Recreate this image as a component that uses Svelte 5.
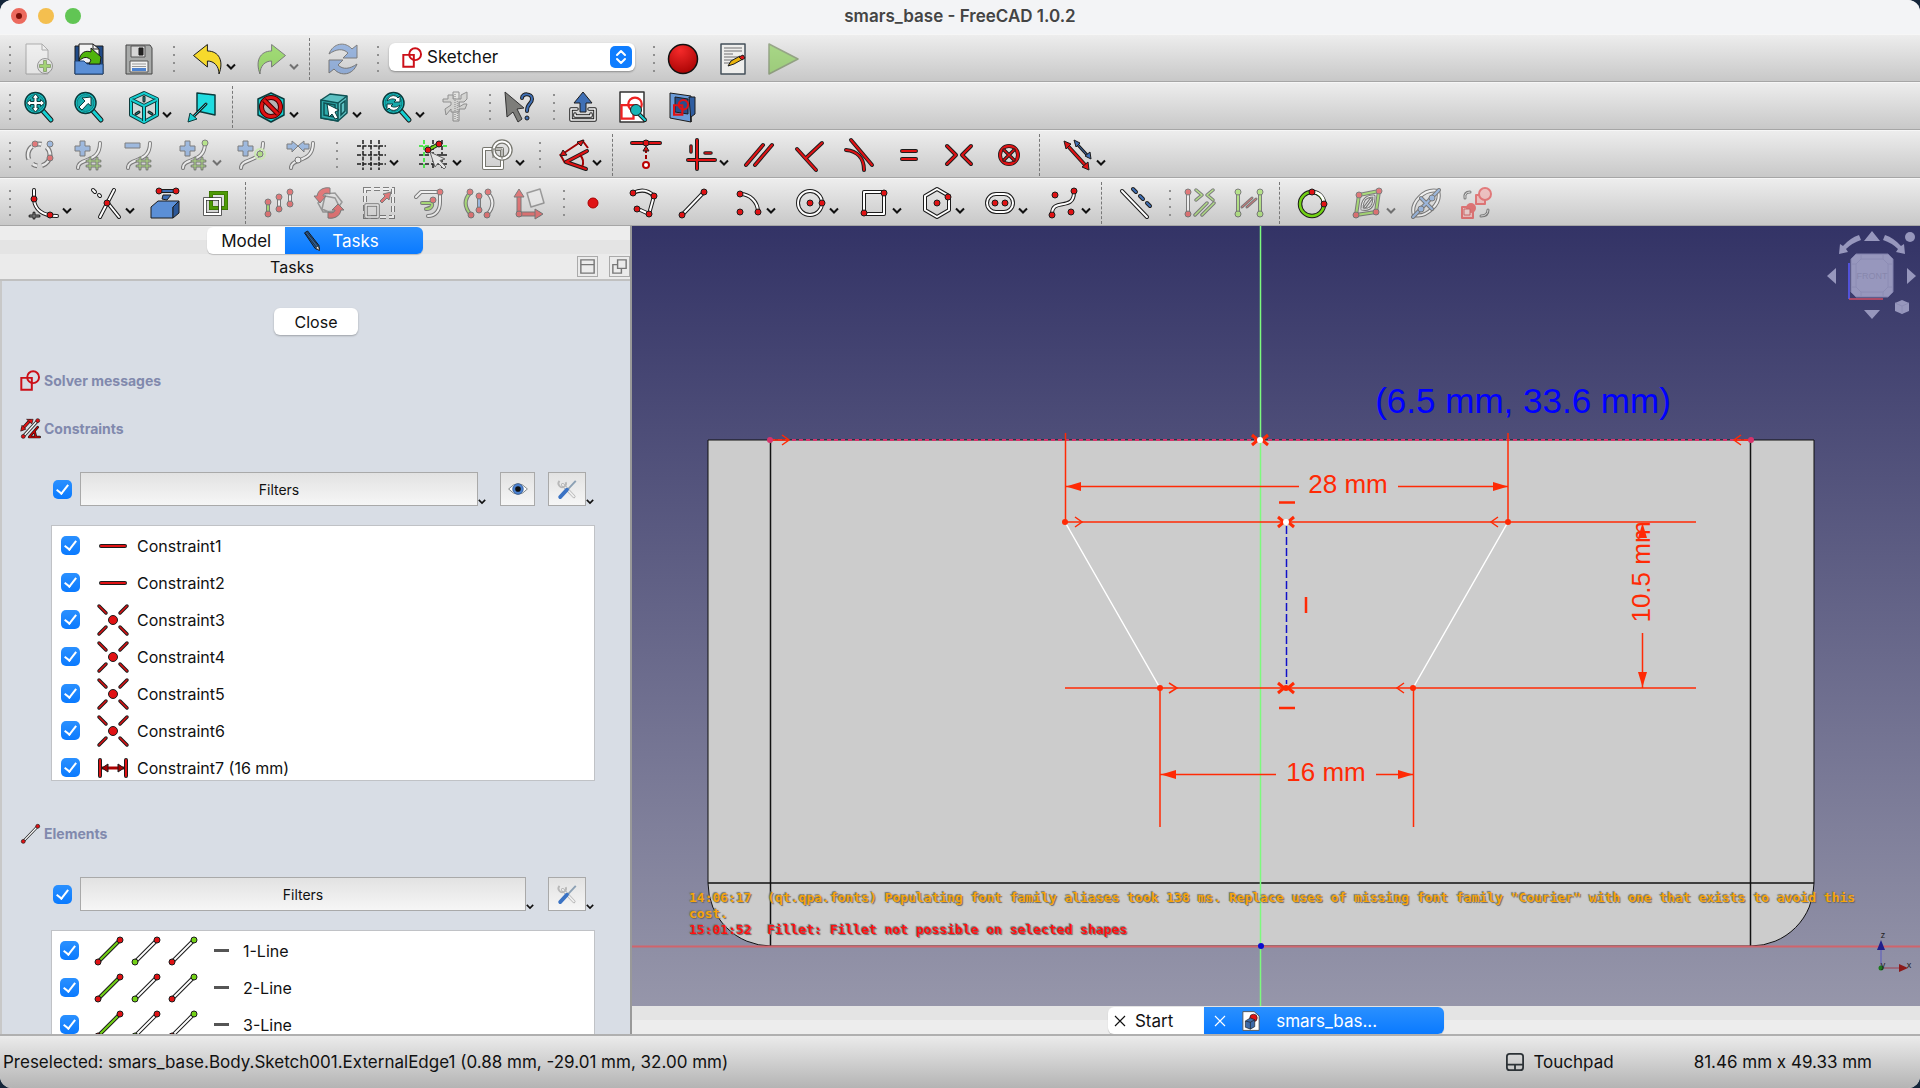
<script lang="ts">
  // Main window of the sketch editor: toolbars, task panel, 3D view, status bar.
  // Toolbar icons are drawn on a 32x32 grid out of a few shared shapes.
  const DARK = '#1c1c1c'
  const RED = '#e01214'
  const GREEN = '#73d216'
  const BLUE = '#3f6fb5'
  const TEAL = '#16d0d2'

  // outlined stroke: dark below, colour on top
  const rod = (d: string, color = '#fff', w = 2) =>
    `<g fill="none" stroke-linecap="round" stroke-linejoin="round"><path d="${d}" stroke="${DARK}" stroke-width="${w + 2}"/><path d="${d}" stroke="${color}" stroke-width="${w}"/></g>`
  const pt = (x: number, y: number, color = RED, r = 3) =>
    `<circle cx="${x}" cy="${y}" r="${r}" fill="${color}" stroke="${DARK}" stroke-width="1"/>`
  const shape = (d: string, fill: string, stroke = DARK, w = 1) =>
    `<path d="${d}" fill="${fill}" stroke="${stroke}" stroke-width="${w}" stroke-linejoin="round"/>`
  const line = (d: string, color = DARK, w = 1, extra = '') =>
    `<path d="${d}" fill="none" stroke="${color}" stroke-width="${w}" ${extra}/>`

  const lens = rod('M20 20 28 29', TEAL, 3) + `<circle cx="12.500" cy="12" r="10.500" fill="${TEAL}" stroke="#0b3b3c" stroke-width="1.500"/><circle cx="12.500" cy="12" r="8.500" fill="#18a9ab" stroke="#0e8284" stroke-width="1"/>`
  const hexagon = 'M16 2 29 8V24L16 31 3 24V8Z'
  const curve = rod('M5 29C5 18 27 25 27 4')
  const hash = rod('M17 19V30M24 19V30M14 22H27M14 27H27', '#8ae234', 1)
  const plus = shape('M7 2H12V7H17V12H12V17H7V12H2V7H7Z', '#5d92dc')
  const undo = (fill: string) => shape('M1.500 12.500 15.400 1.500V8C27 8 32 18 27 31 27 23 22 18 15.400 18V24Z', fill)
  const sketch = (c: string, w: number) => `<g fill="none" stroke="${c}" stroke-width="${w}"><path d="M2 12H18V30H2Z"/><circle cx="20" cy="11" r="9"/></g>`
  const segment = (c: string, a: string, b: string) => rod('M5 27 27 5', c, 2) + pt(5, 27, a) + pt(27, 5, b)

  const icons: Record<string, string> = {
    new: shape('M3 1H19L25 7V31H3Z', '#fafafa', '#777') + line('M19 1V7H25', '#777') + `<circle cx="22" cy="23" r="7.500" fill="#eee" stroke="#555"/>` + shape('M20.500 17.500H23.500V21.500H27.500V24.500H23.500V28.500H20.500V24.500H16.500V21.500H20.500Z', '#73d216', '#4a7a1c'),
    open: shape('M2 3H30V31H2Z', '#204a87') + shape('M6 1H20L26 6V20H6Z', '#f4f4f4') + line('M20 1V6H26') + shape('M2 18H11L14 21H30V31H2Z', '#5b8fd6', '#1d4277') + shape('M6 18C7 9 13 7 18 9V5L28 14 27 21H16L18 17C14 13 10 14 6 18Z', '#4fb40c'),
    save: shape('M3 2H27L29 5V31H3Z', '#a9abaa', '#444') + shape('M8 3H22V14H8Z', '#d6d6d6', '#555') + shape('M16 5H20V12H16Z', '#222') + shape('M7 18H25V29H7Z', '#f2f2f2', '#555') + line('M9 21H23M9 23.500H23', '#999') + shape('M9 25H23V28H9Z', '#4d82cf', '#4d82cf', 0),
    undo: undo('#f6d92c'),
    redo: `<g transform="translate(32 0) scale(-1 1)">${undo('#5fd40a')}</g>`,
    refresh: shape('M2 11C6 0 18-2 25 6L30 2V15H16L21 10C16 5 9 6 2 11Z', '#5287d8') + shape('M30 21C26 32 14 34 7 26L2 30V17H16L11 22C16 27 23 26 30 21Z', '#5287d8'),
    record: `<circle cx="16" cy="16" r="14.500" fill="url(#redball)" stroke="#111" stroke-width="1.500"/>`,
    macro: shape('M4 1H28V31H4Z', '#eeeeec', '#44505a', 1.5) + line('M7 5H25M7 8H25M7 11H16M7 14H25M7 17H22M7 20H14', '#999', 1.5) + shape('M11 23 14 18 23 13 26 16 17 21Z', '#eab40c') + shape('M22 14 26 12 28 15 25 17Z', RED),
    play: shape('M2 1 31 16 2 31Z', '#6cc92a', '#4e6b30', 1.5),
    fitAll: lens + shape('M12.500 3 16 7H14V10.500H17.500V8.500L21.500 12 17.500 15.500V13.500H14V17H16L12.500 21 9 17H11V13.500H7.500V15.500L3.500 12 7.500 8.500V10.500H11V7H9Z', '#fff', '#0b3b3c'),
    fitSel: lens + shape('M18 6V15L15 12.500 9 19 6 16 12 10 9 7Z', '#fff', '#0b3b3c'),
    isometric: shape(hexagon, '#cfd8d8', '#0b3b3c', 4) + line(hexagon, TEAL, 2) + line('M4 9 16 15 28 9M16 15V30', '#0b3b3c', 4) + line('M4 9 16 15 28 9M16 15V30', TEAL, 2) + rod('M16 6V10M8 23 11 21M21 21 24 23', '#0f8f91', 1),
    normalView: shape('M11 2 29 4V24L11 20Z', '#1fdce0', '#0b3b3c', 1.5) + rod('M20 13 6 27', TEAL, 1) + shape('M2 31 4 22 11 28Z', TEAL, '#0b3b3c'),
    noClip: shape(hexagon, TEAL, '#0b3b3c', 1.5) + `<circle cx="16" cy="16" r="9.500" fill="#b5b5b5" stroke="#400" stroke-width="5"/><circle cx="16" cy="16" r="9.500" fill="none" stroke="${RED}" stroke-width="3"/>` + line('M9 9 23 23', '#400', 5) + line('M9 9 23 23', RED, 3),
    boxSelect: shape('M3 9 12 3 29 5V22L20 30 3 27Z', '#5cc0c2', '#0f5254', 1.5) + shape('M3 9 20 12V30L3 27Z', '#2fa9ab', '#0f5254', 1.5) + line('M20 12 29 5M6 12 17 14V26L6 24ZM23 13 27 10V20L23 24Z', '#0f5254', 1.5) + shape('M9 13 21 19 17 21 20 27 17 28 14 23 11 26Z', '#fff', '#0b3b3c'),
    zoomSync: lens + shape('M6 10C8 4 14 3 17 7L19 5V11H13L15 9C12 7 9 8 6 10Z', '#fff', '#0b3b3c') + shape('M19 14C17 20 11 21 8 17L6 19V13H12L10 15C13 17 16 16 19 14Z', '#fff', '#0b3b3c'),
    measure: shape('M14 1H20V30H14Z', '#e6e6e2', '#444') + shape('M4 8H9V4H14V8H22V4L28 1V8L25 11H20V16L25 13H28L26 18H20V21H12V18L7 24 6 18 12 14V11H4Z', '#c9c9c5', '#444') + line('M16 3V29M18.500 10V29', '#666', 1.5, 'stroke-dasharray="1 1"'),
    whatsThis: shape('M2 1 21 17 14 18 19 28 15 31 10 21 4 26Z', '#7d7d7a', '#333') + rod('M19 7C19 2 29 2 29 8 29 13 24 12 24 20', BLUE, 2) + pt(24, 27, BLUE, 2),
    leave: rod('M10 18H4V29H28V18H22M8 23V25H24V23', '#fff', 1.5) + shape('M16 1 25 12H19V21H13V12H7Z', BLUE),
    viewSketch: shape('M3 1H27V31H3Z', '#fff', '#333', 1.5) + `<g transform="translate(3 5) scale(.75)">${sketch('#ee2222', 3)}</g>` + rod('M22 23 28 29', TEAL, 2) + pt(19, 19, '#18b4b6', 5.5),
    viewSection: shape('M3 2 24 5V31L3 27Z', '#6b9bd8') + shape('M22 6H28V23L24 26V31Z', '#2f5da0') + shape('M8 6 21 8V23L8 21Z', '#274f8c') + `<g transform="translate(6 8) scale(.52)">${sketch(RED, 4)}</g>`,
    geometry: `<circle cx="16" cy="16" r="11" fill="none" stroke="${DARK}" stroke-width="5" stroke-dasharray="14 5 5 6"/><circle cx="16" cy="16" r="11" fill="none" stroke="#fff" stroke-width="2.500" stroke-dasharray="14 5 5 6"/>` + pt(12, 5) + pt(27, 5, '#5d92dc') + pt(27, 19),
    incDegree: curve + hash + plus,
    decDegree: curve + hash + shape('M2 4H17V9H2Z', '#5d92dc'),
    incMulti: curve + hash + plus + pt(27, 4, '#8ae234'),
    insertKnot: curve + plus + `<circle cx="24" cy="15" r="5" fill="none" stroke="#bdf58a" stroke-width="2"/>` + pt(24, 15, '#8ae234'),
    joinCurves: curve + pt(12, 21, '#fff') + shape('M1 5H6V2L12 7 6 13V10H1ZM23 5H18V2L12 7 18 13V10H23Z', '#5d92dc'),
    grid: line('M8 1V31M16 1V31M24 1V31M2 7H31M2 16H31M2 25H31', DARK, 1.5, 'stroke-dasharray="4 1.500"'),
    snap: line('M15 1V31M24 1V31M1 16H31M1 25H31', DARK, 1.5, 'stroke-dasharray="4 2"') + line('M6 1V31M1 7H31', '#22e322', 1.5, 'stroke-dasharray="4 2"') + rod('M10 11 21 5', GREEN) + pt(10, 11) + pt(21, 5) + shape('M12 13 27 20 22 21.500 28 28 26 30 20 24 17 28Z', '#e4e4e4', '#666'),
    renderOrder: rod('M3 10H21V29H3Z', '#fff', 2).replaceAll(DARK, '#77776f') + `<circle cx="21" cy="11" r="8.500" fill="none" stroke="#77776f" stroke-width="4.500"/><circle cx="21" cy="11" r="8.500" fill="none" stroke="#fff" stroke-width="2"/>` + line('M12 19V10H21V20', '#77776f', 1),
    dimension: line('M3 16 24 2M24 1 30 9M2 15 7 24', '#a00000', 2) + shape('M2 17 5 11 9 16ZM26 1 19 3 23 7Z', RED) + rod('M29 12 8 23 28 30', RED, 2) + line('M22 16Q27 21 24 28', '#a00000', 2),
    coincident: rod('M2 4H30', RED, 2) + pt(16, 4) + line('M16 10V22', '#a00000', 2, 'stroke-dasharray="4 2"') + shape('M16 7 19 12H13Z', RED) + `<circle cx="16" cy="26" r="3" fill="#fff" stroke="#b00" stroke-width="2"/>`,
    horVer: rod('M12 1V30M3 21H30', RED, 2) + rod('M6 7V13M20 14H26', RED, 1.5),
    parallel: rod('M3 26 20 6M12 26 29 6', RED, 2),
    perpendicular: rod('M4 10 23 31M13 19 29 4', RED, 2),
    tangent: rod('M8 1 29 26', RED, 2) + rod('M3 11C14 12 21 19 21 31', RED, 2),
    equal: rod('M9 12H23M9 20H23', RED, 2),
    symmetric: rod('M4 7 13 16 4 25M28 7 19 16 28 25', RED, 2),
    block: `<circle cx="16" cy="16" r="9" fill="none" stroke="${DARK}" stroke-width="4"/><circle cx="16" cy="16" r="9" fill="none" stroke="${RED}" stroke-width="2.500"/>` + rod('M11 11 21 21M21 11 11 21', RED, 1.5),
    toggleDriving: rod('M5 6 24 27', RED, 2) + shape('M2 2 9 5 4 10ZM27 31 26 23 20 28Z', RED) + rod('M15 5 26 17', BLUE, 1) + shape('M12 1 18 4 14 8ZM29 20 28 13 23 17Z', BLUE),
    fillet: rod('M6 3V13C7 22 14 29 29 29') + rod('M2 29H11M6 26V31', '#888', 1) + pt(6, 12) + pt(22, 28),
    trim: rod('M23 3 9 30M16 15 28 30M2 3 4 5M8 8 9 9') + pt(16, 16),
    external: shape('M2 20 9 14H30L24 20V31H2Z', '#5b8fd6') + shape('M24 20 30 14V26L24 31Z', '#2b5797') + rod('M10 4H27', BLUE, 2) + pt(10, 4) + pt(27, 4) + shape('M13 12 14 8 22 8 18 13Z', BLUE),
    carbonCopy: `<g fill="none"><path d="M12 6H27V21H12Z" stroke="#2c5c00" stroke-width="4"/><path d="M12 6H27V21H12Z" stroke="#4e9a06" stroke-width="3"/><path d="M6 12H21V27H6Z" stroke="#333" stroke-width="3.500"/><path d="M6 12H21V27H6Z" stroke="#fff" stroke-width="2"/></g>`,
    translate: rod('M5 15V26', GREEN) + rod('M16 10V22M27 5V17') + pt(5, 15) + pt(5, 27) + pt(16, 10) + pt(16, 22) + pt(27, 5) + pt(27, 17),
    rotate: line('M10 7 22 6 29 15 23 24 10 25 5 16ZM12 9 22 11 26 19 20 27 9 22Z', '#555', 1.5) + shape('M1 9 4 9C5 2 12 0 17 1V7C13 5 10 7 10 9H13L7 16ZM31 23 28 23C27 30 20 32 15 31V25C19 27 22 25 22 23H19L25 17Z', RED),
    scale: line('M2 2H30V30H2Z', DARK, 4, 'stroke-dasharray="6 3"') + line('M2 2H30V30H2Z', '#fff', 2, 'stroke-dasharray="6 3"') + rod('M3 18H15V30H3Z', '#fff', 1.5) + shape('M17 14 22 9 20 7 28 5 26 13 24 11 19 16Z', RED),
    offset: rod('M3 10 8 5H27V15C27 24 22 29 15 29') + rod('M9 16H18C20 16 20 22 13 22', GREEN) + pt(27, 5) + pt(20, 13),
    mirror: rod('M8 5C1 12 1 20 8 28', GREEN) + rod('M24 5C31 12 31 20 24 28') + rod('M16 9V23', '#5d92dc') + pt(7, 5) + pt(8, 28) + pt(16, 9) + pt(16, 23) + pt(25, 5) + pt(24, 28),
    axes: shape('M14 6 27 2 31 16 18 20Z', '#eee', '#555', 1.5) + rod('M6 27V7M6 27H26', RED, 3) + shape('M1 10 6 2 11 10ZM22 22 30 27 22 32Z', RED) + pt(6, 27),
    point: `<circle cx="16" cy="16" r="5" fill="${RED}" stroke="#a00" stroke-width="1"/>`,
    polyline: rod('M6 6Q18 0 27 9L22 27 9 21') + pt(6, 6) + pt(27, 9) + pt(22, 27) + pt(10, 22),
    lineTool: rod('M5 28 27 5') + pt(5, 28) + pt(27, 5),
    arc: rod('M8 7C18 7 26 15 26 25') + pt(8, 7) + pt(26, 25) + pt(8, 25),
    circle: `<circle cx="15" cy="16" r="12" fill="none" stroke="${DARK}" stroke-width="4"/><circle cx="15" cy="16" r="12" fill="none" stroke="#fff" stroke-width="2"/>` + pt(15, 16) + pt(27, 16),
    rectangle: rod('M6 5H26V27H6Z') + pt(26, 6) + pt(6, 26),
    polygon: rod('M16 2 28 9V23L16 30 4 23V9Z') + pt(16, 16) + pt(27, 10),
    slot: rod('M12 7H20A9 9 0 0 1 20 25H12A9 9 0 0 1 12 7Z', '#fff', 2) + pt(11, 16) + pt(21, 16),
    spline: rod('M5 27C5 10 27 25 27 5') + pt(5, 28) + pt(27, 4) + pt(8, 8) + pt(24, 25),
    construction: rod('M3 4 28 30') + rod('M14 2 17 5M21 9 24 12M28 16 31 19', BLUE, 2),
    selectCons: rod('M5 6V26') + pt(5, 5) + pt(5, 27) + rod('M13 3 19 8 13 13M30 3 24 8 30 13M12 28 24 16M19 28 31 16', '#8ae234', 1.5),
    selectElem: rod('M5 6V26M27 6V26', '#8ae234') + pt(5, 5, '#8ae234') + pt(5, 27, '#8ae234') + pt(27, 5, '#8ae234') + pt(27, 27, '#8ae234') + rod('M9 20 19 11M14 20 23 12', RED, 1),
    periodic: `<circle cx="15" cy="17" r="12" fill="none" stroke="${DARK}" stroke-width="4.500"/><circle cx="15" cy="17" r="12" fill="none" stroke="${GREEN}" stroke-width="2.500"/>` + line('M16 5C22 5 27 10 27 16', '#fff', 2.5) + pt(15, 5) + pt(27, 17),
    bspline: rod('M7 8 27 4 24 25 4 28Z', GREEN) + rod('M10 22C10 10 17 9 22 9 22 18 19 24 10 22ZM13 20 19 12', '#fff', 1) + pt(7, 8) + pt(27, 4) + pt(24, 25) + pt(4, 28),
    ellipseAxes: rod('M4 28C0 16 14 1 28 4 32 16 17 31 4 28Z') + rod('M3 30 29 3M11 11 22 22', '#5d92dc', 2) + pt(11, 22, '#5d92dc') + pt(22, 11, '#5d92dc'),
    switchSpace: shape('M16 8H25V17H16ZM2 20H13V31H2Z', '#f6a0a0', RED, 2) + `<circle cx="25" cy="7" r="6" fill="#f6a0a0" stroke="${RED}" stroke-width="2"/><circle cx="11" cy="21" r="5" fill="${RED}"/>` + shape('M4 22H10V28H4Z', '#f6c0c0', '#b00') + rod('M5 11Q4 5 10 5M28 23Q28 29 21 29', '#ddd', 1),
    constraints: rod('M4 16 15 4', RED, 3) + shape('M10 2H20L18 9ZM1 20 3 11 9 17Z', RED) + line('M6 27 26 5', '#333', 5) + line('M6 27 26 5', '#fff', 2) + pt(5, 28) + pt(27, 4) + rod('M27 14 14 29H30M22 20 24 28', '#c00', 2),
    sketch: sketch('#cc1018', 3),
    line: rod('M4 16H28', RED, 2),
    pointOn: rod('M2 2 9 9M30 2 23 9M2 30 9 23M30 30 23 23', RED, 1.5) + pt(16, 16, RED, 4.5),
    distance: rod('M3 8V24M29 8V24', RED, 2) + line('M5 16H27', '#a00', 3) + shape('M5 16 11 12V20ZM27 16 21 12V20Z', '#a00'),
    eEdge: segment(GREEN, RED, RED),
    eStart: segment('#fff', GREEN, RED),
    eEnd: segment('#fff', RED, GREEN),
    eye: shape('M1 16Q16-1 31 16 16 33 1 16Z', '#fff', '#7a8080', 1.5) + `<circle cx="16" cy="16" r="8.500" fill="#4d82cf" stroke="#204a87"/><circle cx="16" cy="16" r="4.500" fill="#111"/>`,
    tools: rod('M9 9 27 28', '#eee', 3).replaceAll(DARK, '#a8a8a8') + `<path d="M4 3A6 6 0 1 0 14 5" fill="none" stroke="#b8b8b8" stroke-width="3"/>` + line('M30 3 17 17', '#8ba0b4', 3) + line('M16 17 5 29', '#3b73c4', 6, 'stroke-linecap="round"'),
    pencil: shape('M4 3 9 0 27 23 28 31 21 28Z', '#2f6097', '#111', 1.5) + line('M6 4 23 26M8 2 26 24', '#111') + shape('M22 27 26 24 28 31Z', '#fff'),
    document: shape('M3 1H21L29 8V31H3Z', '#fff', '#555', 1.5) + pt(20, 11, RED, 6) + shape('M7 16 15 11 22 14V25L15 29 7 26Z', '#3d6aa8') + line('M7 16 15 18 22 14M15 18V29'),
  }

  type Item = { icon?: string; label?: string; menu?: boolean; off?: boolean; sep?: boolean; handle?: boolean; combo?: boolean }
  // icon name, suffix + for a drop-down, suffix - for disabled
  const bar = (text: string): Item[] =>
    text.split(' ').map((t) => {
      if (t === '|') return { sep: true }
      if (t === '::') return { handle: true }
      if (t === 'combo') return { combo: true }
      const name = t.replace(/[+-]/g, '')
      return { icon: name, label: name, menu: t.includes('+'), off: t.includes('-') }
    })

  const toolbars = [
    bar(':: new- open save :: undo+ redo+- | refresh- :: combo :: record macro play-'),
    bar(':: fitAll fitSel isometric+ normalView | noClip+ boxSelect+ zoomSync+ measure- :: whatsThis :: leave viewSketch viewSection'),
    bar(':: geometry- incDegree- decDegree- incMulti+- insertKnot- joinCurves- :: grid+ snap+ renderOrder+ :: dimension+ | coincident horVer+ parallel perpendicular tangent equal symmetric block | toggleDriving+'),
    bar(':: fillet+ trim+ external carbonCopy | translate- rotate- scale- offset- mirror- axes- :: point polyline lineTool arc+ circle+ rectangle+ polygon+ slot+ spline+ | construction :: selectCons- selectElem- | periodic bspline+- ellipseAxes- switchSpace-'),
  ]

  const constraints = [
    { name: 'Constraint1', icon: 'line' },
    { name: 'Constraint2', icon: 'line' },
    { name: 'Constraint3', icon: 'pointOn' },
    { name: 'Constraint4', icon: 'pointOn' },
    { name: 'Constraint5', icon: 'pointOn' },
    { name: 'Constraint6', icon: 'pointOn' },
    { name: 'Constraint7 (16 mm)', icon: 'distance' },
  ]
  const elements = ['1-Line', '2-Line', '3-Line']
</script>

{#snippet icon(name: string)}
  <svg class="icon" viewBox="0 0 32 32" aria-hidden="true">{@html icons[name]}</svg>
{/snippet}

{#snippet chevron()}
  <svg class="chevron" viewBox="0 0 10 7" aria-hidden="true"><path d="M1 1.500 5 5.500 9 1.500" fill="none" stroke="currentColor" stroke-width="2" /></svg>
{/snippet}

<svg class="defs" aria-hidden="true">
  <radialGradient id="redball" cx=".4" cy=".2" r=".9"><stop offset="0" stop-color="#f52a2a" /><stop offset="1" stop-color="#a30000" /></radialGradient>
</svg>

<div class="window">
  <header class="titlebar">
    <div class="lights">
      <button class="light close" aria-label="Close window"></button>
      <button class="light min" aria-label="Minimise window"></button>
      <button class="light max" aria-label="Zoom window"></button>
    </div>
    <h1>smars_base - FreeCAD 1.0.2</h1>
  </header>

  {#each toolbars as items, row (row)}
    <div class="toolbar" role="toolbar">
      {#each items as item, i (i)}
        {#if item.sep}
          <span class="sep"></span>
        {:else if item.handle}
          <span class="handle"><i></i><i></i><i></i><i></i></span>
        {:else if item.combo}
          <label class="combo">
            {@render icon('sketch')}
            <select aria-label="Workbench"><option>Sketcher</option></select>
            <svg class="stepper" viewBox="0 0 22 22" aria-hidden="true"><rect width="22" height="22" rx="5" fill="#0f7dff" /><path d="M7 9 11 5 15 9M7 13 11 17 15 13" fill="none" stroke="#fff" stroke-width="2" stroke-linecap="round" stroke-linejoin="round" /></svg>
          </label>
        {:else}
          <button class="tool" class:menu={item.menu} disabled={item.off} aria-label={item.label}>
            {@render icon(item.icon ?? '')}
            {#if item.menu}{@render chevron()}{/if}
          </button>
        {/if}
      {/each}
    </div>
  {/each}

  <main>
    <aside>
      <nav class="tabs">
        <button class="tab">Model</button>
        <button class="tab active">{@render icon('pencil')}Tasks</button>
      </nav>
      <div class="dock-title">
        <span>Tasks</span>
        <button aria-label="Toggle overlay"><svg viewBox="0 0 20 20"><path d="M3 3H17V17H3ZM3 8H17" /></svg></button>
        <button aria-label="Float panel"><svg viewBox="0 0 20 20"><path d="M8 3H17V12H8ZM8 8H3V17H12V12" /></svg></button>
      </div>

      <div class="tasks">
        <button class="push">Close</button>

        <h2>{@render icon('sketch')}Solver messages</h2>
        <h2>{@render icon('constraints')}Constraints</h2>
        <div class="filters">
          <input type="checkbox" checked aria-label="Toggle all constraints" />
          <button class="flat wide">Filters</button>
          {@render chevron()}
          <button class="flat eye" aria-label="Show or hide">{@render icon('eye')}</button>
          <button class="flat settings" aria-label="Constraint settings">{@render icon('tools')}</button>
          {@render chevron()}
        </div>
        <ul class="constraint-list">
          {#each constraints as c (c.name)}
            <li><label><input type="checkbox" checked />{@render icon(c.icon)}<span>{c.name}</span></label></li>
          {/each}
        </ul>

        <h2 class="elements">{@render icon('lineTool')}Elements</h2>
        <div class="filters">
          <input type="checkbox" checked aria-label="Toggle all elements" />
          <button class="flat wide">Filters</button>
          {@render chevron()}
          <button class="flat settings" aria-label="Element settings">{@render icon('tools')}</button>
          {@render chevron()}
        </div>
        <ul class="element-list">
          {#each elements as name (name)}
            <li>
              <label>
                <input type="checkbox" checked />
                {@render icon('eEdge')}{@render icon('eStart')}{@render icon('eEnd')}
                <i class="dash"></i><span>{name}</span>
              </label>
            </li>
          {/each}
        </ul>
      </div>
    </aside>

    <section class="view">
      <div class="canvas">
        <svg class="scene" viewBox="632 226 1288 780" preserveAspectRatio="xMidYMid slice">
          <path d="M708 440H1814V883A63 63 0 0 1 1751 946H771A63 63 0 0 1 708 883Z" fill="#ccc" stroke="#111" />
          <path d="M770.500 440V946M1750.500 440V946M708 883H1814" stroke="#111" stroke-width="1.500" fill="none" />
          <path d="M632 946.500H1920" stroke="#d0646c" stroke-width="2" />
          <path d="M1260.500 226V1006" stroke="#7dfa7d" stroke-width="1.500" />
          <path d="M771 440H1751" stroke="#d6336c" stroke-width="2" stroke-dasharray="4 3" />
          <path d="M1065 522 1160 688M1508 522 1413 688" stroke="#fff" stroke-width="1.500" />
          <path d="M1286.500 526V684" stroke="#1010c8" stroke-width="1.500" stroke-dasharray="8 3" />

          <g fill="none" stroke="#ff2a05" stroke-width="1.500">
            <path d="M1065.500 433V522M1508 433V522M1065 522H1696M1065 688H1696M1160 688V827M1413.500 688V827" />
            <path d="M1065 486.500H1299M1398 486.500H1508M1160 774.500H1276M1376 774.500H1413M1642.500 633V688" />
            <path d="M1075 517 1082 522 1075 527M1498 517 1491 522 1498 527M1169 683 1177 688 1169 693M1404 683 1397 688 1404 693M771 440H789M782 435 789 440 782 445M1751 440H1734M1741 435 1734 440 1741 445" />
            <path d="M1279 502.500H1295M1279 708H1295M1306 597V613" stroke-width="2.500" />
          </g>
          {#each [[1260, 440], [1286, 522], [1286, 688]] as [x, y] (y)}
            <path d="M{x - 8} {y - 5}L{x - 2} {y}L{x - 8} {y + 5}M{x + 8} {y - 5}L{x + 2} {y}L{x + 8} {y + 5}" fill="none" stroke="#ff2a05" stroke-width="3" />
            <circle cx={x} cy={y} r="3" fill={y === 688 ? '#ff2a05' : '#fff'} />
          {/each}
          <g fill="#ff2a05">
            <path d="M1066 486.500 1081 482V491ZM1508 486.500 1493 482V491ZM1161 774.500 1176 770V779ZM1413 774.500 1398 770V779ZM1642.500 523 1638 538H1647ZM1642.500 687 1638 672H1647Z" />
            <circle cx="1065" cy="522" r="3" /><circle cx="1508" cy="522" r="3" />
            <circle cx="1160" cy="688" r="3" /><circle cx="1413" cy="688" r="3" />
          </g>
          <circle cx="770" cy="440" r="3" fill="#d6336c" /><circle cx="1751" cy="440" r="3" fill="#d6336c" />
          <circle cx="1261" cy="946" r="3" fill="#0b0bd0" />

          <g class="dims">
            <text x="1348" y="493">28 mm</text>
            <text x="1326" y="781">16 mm</text>
            <text transform="translate(1650 572) rotate(-90)">10.5 mm</text>
          </g>
          <text class="coords" x="1523" y="413">(6.5 mm, 33.6 mm)</text>
        </svg>

        <svg class="navcube" viewBox="0 0 92 92" aria-label="Navigation cube">
          <g fill="#9797bd">
            <path d="M48 3 56 13H40ZM48 91 56 82H40ZM3 48 12 40V56ZM92 48 83 40V56Z" />
            <path d="M15 26 16 16 19 18Q26 10 35 7L37 12Q28 15 22 21L24 24Z" /><path d="M81 26 80 16 77 18Q70 10 61 7L59 12Q68 15 74 21L72 24Z" />
            <circle cx="86" cy="9" r="5" />
            <path d="M32 26H64L69 31V64L64 69H32L27 64V31Z" stroke="#8080ac" />
            <path d="M78 72 85 75V83L78 86 71 83V75Z" />
          </g>
          <path d="M37 31H59L64 36V59L59 64H37L32 59V36ZM37 26V31M59 26V31M27 36H32M27 59H32M64 36H69M64 59H69M37 64V69M59 64V69M71 75 78 78 85 75M78 78V86" fill="none" stroke="#8c8cb4" />
          <text x="48" y="51">FRONT</text>
          <path d="M25 35V71" stroke="#5b5bff" stroke-width="1.500" /><path d="M25 71H59" stroke="#cc4f66" stroke-width="1.500" />
        </svg>

        <svg class="axes" viewBox="0 0 40 50" aria-label="Axis cross">
          <path d="M10 38V18" stroke="#5a5abf" /><path d="M10 38H30" stroke="#a04050" />
          <path d="M10 10 14 20H6Z" fill="#20208c" /><path d="M37 38 28 34V42Z" fill="#8c1a1a" />
          <circle cx="10" cy="38" r="2.500" fill="#1d7a1d" />
          <text x="12" y="8">z</text><text x="38" y="38">x</text><text x="12" y="38">y</text>
        </svg>

        <div class="console">
          <p>14:06:17&nbsp; (qt.qpa.fonts) Populating font family aliases took 138 ms. Replace uses of missing font family "Courier" with one that exists to avoid this<br />cost.</p>
          <p class="error">15:01:52&nbsp; Fillet: Fillet not possible on selected shapes</p>
        </div>
      </div>

      <nav class="tabs docs">
        <button class="tab"><svg class="x" viewBox="0 0 12 12"><path d="M1 1 11 11M11 1 1 11" /></svg>Start</button>
        <button class="tab active"><svg class="x" viewBox="0 0 12 12"><path d="M1 1 11 11M11 1 1 11" /></svg>{@render icon('document')}smars_bas...</button>
      </nav>
    </section>
  </main>

  <footer>
    <span class="message">Preselected: smars_base.Body.Sketch001.ExternalEdge1 (0.88 mm, -29.01 mm, 32.00 mm)</span>
    <button class="navstyle">
      <svg viewBox="0 0 20 20"><path d="M4 1H16Q19 1 19 4V16Q19 19 16 19H4Q1 19 1 16V4Q1 1 4 1ZM1 13H19M10 13V19" fill="none" stroke="#2c3236" stroke-width="2" /></svg>
      Touchpad
    </button>
    <span class="size">81.46 mm x 49.33 mm</span>
  </footer>
</div>

<style>
  :global(body) {
    background: #14263a;
  }
  .window {
    display: flex;
    flex-direction: column;
    height: 100vh;
    overflow: hidden;
    border-radius: 12px;
    background: #ebebeb;
    color: #111;
    font-family: Inter, 'Liberation Sans', sans-serif;
    font-size: 16px;
  }
  button,
  select {
    border: 0;
    padding: 0;
    background: none;
    color: inherit;
    font: inherit;
  }
  .defs {
    position: absolute;
    width: 0;
    height: 0;
  }
  .icon {
    flex: none;
    width: 32px;
    height: 32px;
    overflow: visible;
  }
  .chevron {
    flex: none;
    width: 10px;
    height: 7px;
  }

  .titlebar {
    position: relative;
    flex: none;
    height: 34px;
    background: #f3f4f6;
  }
  h1 {
    margin: 0;
    color: #444;
    font-size: 17px;
    font-weight: 600;
    line-height: 32px;
    text-align: center;
  }
  .lights {
    position: absolute;
    top: 8px;
    left: 11px;
    display: flex;
    gap: 11px;
  }
  .light {
    width: 16px;
    height: 16px;
    border-radius: 50%;
  }
  .close {
    border: 5px solid #ec6a5e;
    background: #7a0f08;
  }
  .min {
    background: #f4bf4f;
  }
  .max {
    background: #61c554;
  }

  .toolbar {
    display: flex;
    align-items: center;
    flex: none;
    box-sizing: border-box;
    height: 48px;
    padding-top: 1px;
    border-top: 1px solid #f6f6f6;
    border-bottom: 1px solid #a6a6a6;
    background: linear-gradient(#ededed, #c8c8c8);
  }
  .tool {
    display: flex;
    align-items: center;
    justify-content: center;
    flex: none;
    width: 50px;
    height: 44px;
  }
  .tool.menu {
    justify-content: flex-start;
    gap: 2px;
    width: 63px;
    padding-left: 14px;
  }
  .tool .chevron {
    margin-top: 16px;
  }
  .tool:disabled {
    opacity: 0.5;
  }
  .handle {
    display: flex;
    flex-direction: column;
    align-items: center;
    flex: none;
    gap: 6px;
    width: 8px;
    padding-left: 6px;
  }
  .handle i {
    width: 2px;
    height: 2px;
    background: #8f8f8f;
  }
  .sep {
    flex: none;
    width: 8px;
    height: 42px;
    margin-left: 5px;
    border-left: 1px dashed #777;
  }
  .combo {
    display: flex;
    align-items: center;
    flex: none;
    gap: 4px;
    box-sizing: border-box;
    width: 246px;
    height: 28px;
    margin: 0 9px 3px 7px;
    padding: 0 3px 0 13px;
    border-radius: 6px;
    background: #fff;
    box-shadow: 0 1px 2px #0005;
  }
  .combo .icon {
    width: 21px;
    height: 21px;
  }
  select {
    flex: 1;
    appearance: none;
    font-size: 17px;
  }
  .stepper {
    width: 22px;
    height: 22px;
  }

  main {
    display: flex;
    flex: 1;
    min-height: 0;
  }
  aside {
    display: flex;
    flex-direction: column;
    flex: none;
    box-sizing: border-box;
    width: 632px;
    border-right: 2px solid #999;
  }
  .tabs {
    display: flex;
    justify-content: center;
    flex: none;
    height: 27px;
    padding-top: 1px;
    background: linear-gradient(#ededed 50%, #e4e4e4 50%);
  }
  .tab {
    display: flex;
    align-items: center;
    justify-content: center;
    height: 27px;
    padding: 0 14px;
    border-radius: 6px 0 0 6px;
    background: #fff;
    box-shadow: 0 1px 1px #0003;
    font-size: 17px;
  }
  .tab.active {
    gap: 10px;
    padding: 0 44px 0 17px;
    border-radius: 0 6px 6px 0;
    background: linear-gradient(#2a90ff, #0a7aff);
    color: #fff;
  }
  .tab .icon {
    width: 20px;
    height: 20px;
  }
  .dock-title {
    display: flex;
    align-items: center;
    flex: none;
    gap: 11px;
    height: 25px;
    border-bottom: 2px solid #c0c0c0;
  }
  .dock-title span {
    flex: 1;
    padding-left: 18px;
    text-align: center;
  }
  .dock-title button {
    width: 21px;
    height: 21px;
    border: 1px solid #aaa;
  }
  .dock-title svg {
    display: block;
    fill: none;
    stroke: #777;
    stroke-width: 1.5;
  }
  .tasks {
    flex: 1;
    min-height: 0;
    overflow: hidden;
    border-left: 2px solid #c8c8c8;
    background: #d8dde5;
  }
  .push {
    display: block;
    width: 84px;
    height: 27px;
    margin: 27px auto 0;
    border-radius: 6px;
    background: #fff;
    box-shadow: 0 1px 2px #0004;
    font-size: 16px;
  }
  h2 {
    display: flex;
    align-items: center;
    gap: 3px;
    height: 20px;
    margin: 28px 0 0 18px;
    color: #8189ad;
    font-size: 14px;
    font-weight: 700;
  }
  .push + h2 {
    margin-top: 35px;
  }
  h2 .icon {
    width: 21px;
    height: 21px;
  }
  .filters {
    display: flex;
    align-items: center;
    height: 34px;
    margin: 34px 36px 19px 51px;
  }
  input {
    flex: none;
    width: 19px;
    height: 19px;
    margin: 0;
    appearance: none;
    border-radius: 5px;
    background: linear-gradient(#2a90ff, #0a7aff);
  }
  input::after {
    content: '';
    display: block;
    width: 5px;
    height: 10px;
    margin: 2px 0 0 6px;
    border: solid #fff;
    border-width: 0 2px 2px 0;
    transform: rotate(38deg);
  }
  .flat {
    display: flex;
    align-items: center;
    justify-content: center;
    box-sizing: border-box;
    height: 34px;
    border: 1px solid #a9a9a9;
    background: linear-gradient(#e2e2e2, #f6f6f6);
    font-size: 14px;
  }
  .flat .icon {
    width: 20px;
    height: 20px;
  }
  .wide {
    flex: 1;
    margin-left: 8px;
  }
  .filters .chevron {
    width: 8px;
    margin-top: 24px;
  }
  .eye {
    width: 35px;
    margin-left: 14px;
  }
  .settings {
    width: 38px;
    margin-left: 13px;
  }
  .wide + .chevron + .settings {
    margin-left: 14px;
  }
  ul {
    box-sizing: border-box;
    margin: 0 35px 0 49px;
    padding: 1px 0 0;
    overflow: hidden;
    border: 1px solid #c0c2c6;
    background: #fff;
    list-style: none;
  }
  .constraint-list {
    height: 256px;
  }
  .element-list {
    height: 256px;
  }
  .elements {
    margin-top: 42px;
  }
  li label {
    display: flex;
    align-items: center;
    height: 37px;
    padding-left: 8px;
  }
  .constraint-list input {
    margin: 0 17px 0 1px;
  }
  .constraint-list span {
    margin-left: 8px;
  }
  .element-list input {
    margin-right: 14px;
  }
  .element-list .icon {
    margin-right: 5px;
  }
  .dash {
    width: 15px;
    height: 3px;
    margin: 0 14px 0 10px;
    background: #555;
  }

  .view {
    display: flex;
    flex-direction: column;
    flex: 1;
    min-width: 0;
  }
  .canvas {
    position: relative;
    flex: 1;
    min-height: 0;
    overflow: hidden;
    background: linear-gradient(#333366, #9696aa);
  }
  .scene {
    display: block;
    width: 100%;
    height: 100%;
  }
  text {
    font-family: 'Liberation Sans', sans-serif;
    text-anchor: middle;
  }
  .dims {
    fill: #ff2a05;
    font-size: 26px;
  }
  .coords {
    fill: #0000ff;
    font-size: 35px;
  }
  .navcube {
    position: absolute;
    top: 2px;
    right: 4px;
    width: 92px;
    height: 92px;
  }
  .navcube text {
    fill: #8787ad;
    font-size: 9px;
  }
  .axes {
    position: absolute;
    right: 9px;
    bottom: 26px;
    width: 40px;
    height: 50px;
    overflow: visible;
  }
  .axes text {
    fill: #222;
    font-size: 9px;
  }
  .console {
    position: absolute;
    right: 0;
    bottom: 68px;
    left: 57px;
    color: #f5a30a;
    font: bold 13px/16px 'DejaVu Sans Mono', monospace;
    text-shadow: 1px 1px 1px #666, -1px -1px 1px #777;
  }
  .console p {
    margin: 0;
  }
  .error {
    color: #ff1010;
  }
  .docs {
    background: linear-gradient(#e4e4e4 50%, #ededed 50%);
  }
  .docs .tab {
    gap: 9px;
    padding: 0 31px 0 6px;
  }
  .docs .tab.active {
    gap: 15px;
    padding: 0 67px 0 10px;
  }
  .x {
    width: 12px;
    height: 12px;
    fill: none;
    stroke: currentColor;
    stroke-width: 1.2;
  }

  footer {
    display: flex;
    align-items: center;
    flex: none;
    box-sizing: border-box;
    height: 54px;
    padding: 0 48px 0 3px;
    border-top: 2px solid #b0b0b0;
    background: linear-gradient(#ebebeb, #b4b4b4);
    font-size: 17px;
  }
  .message {
    flex: 1;
  }
  .navstyle {
    display: flex;
    align-items: center;
    gap: 9px;
    margin-right: 80px;
  }
  .navstyle svg {
    width: 18px;
    height: 18px;
  }
</style>
